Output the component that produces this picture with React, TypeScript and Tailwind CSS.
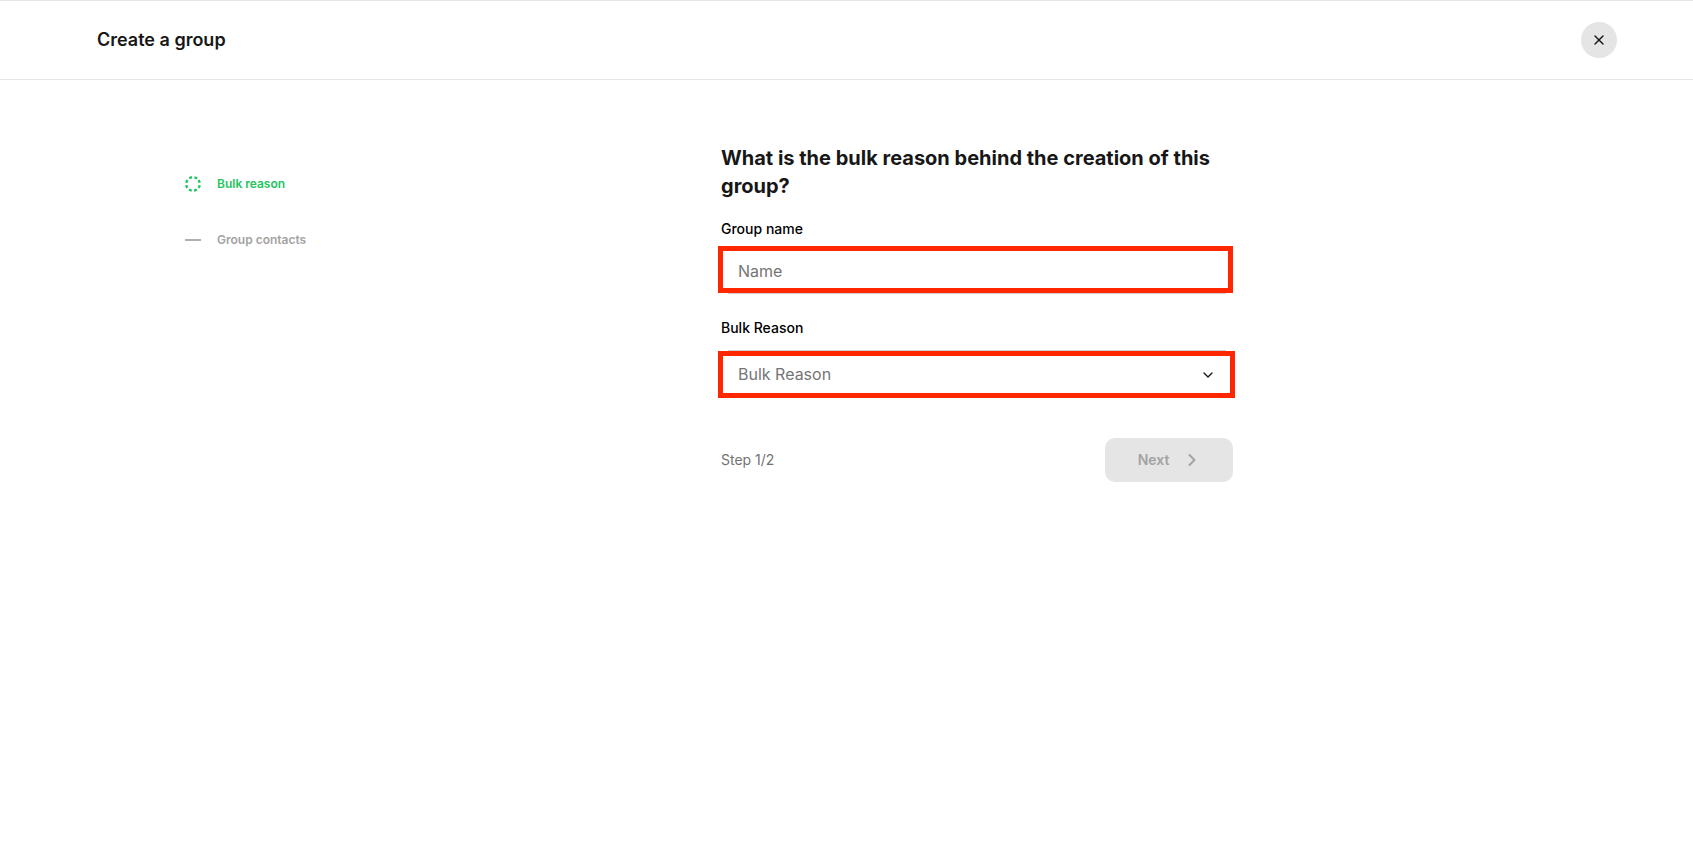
import { ChevronDown, ChevronRight, X } from "lucide-react"

function StepItem({ label, active }: { label: string; active?: boolean }) {
  return (
    <div className="flex h-4 items-center gap-4">
      {active ? (
        <svg width="16" height="16" viewBox="0 0 16 16" fill="none">
          <circle
            cx="8"
            cy="8"
            r="6.8"
            stroke="#22c55e"
            strokeWidth="2.4"
            strokeDasharray="2.9 2.44"
            transform="rotate(-35 8 8)"
          />
        </svg>
      ) : (
        <span className="h-0.5 w-4 bg-[#b0b0b0]" />
      )}
      <span className={active ? "text-xs font-semibold text-[#22c55e]" : "text-xs font-semibold text-[#a3a3a3]"}>
        {label}
      </span>
    </div>
  )
}

export default function App() {
  return (
    <div className="min-h-[859px] bg-white font-['Inter',sans-serif]">
      <header className="flex h-20 items-center justify-between border-y border-[#e5e5e5] pl-[97px] pr-[76px]">
        <h1 className="text-lg font-semibold text-[#171717]">Create a group</h1>
        <button type="button" className="flex size-9 items-center justify-center rounded-full bg-[#e5e5e5] text-[#171717]">
          <X className="size-4" />
        </button>
      </header>

      <main className="flex pl-[185px] pt-16">
        <nav className="flex w-[536px] flex-col gap-10 pt-8">
          <StepItem label="Bulk reason" active />
          <StepItem label="Group contacts" />
        </nav>

        <form className="w-[512px]">
          <h2 className="text-xl font-bold leading-7 text-[#171717]">
            What is the bulk reason behind the creation of this group?
          </h2>

          <label className="mt-[19px] block text-sm font-medium leading-5 text-black">Group name</label>
          <div className="-ml-[3px] mt-[7px] flex h-[47px] w-[515px] items-center border-[5px] border-[#ff2600] pl-[15px] pt-[2px] text-base text-[#757575]">
            Name
          </div>
          <div className="ml-[7px] h-px w-[498px] bg-[#cfcfcf]" />

          <label className="mt-[24px] block text-sm font-medium leading-5 text-black">Bulk Reason</label>
          <div className="ml-[7px] mt-[12px] h-px w-[498px] bg-[#cfcfcf]" />
          <div className="-ml-[3px] flex h-[47px] w-[517px] items-center justify-between border-[5px] border-[#ff2600] pl-[15px] pr-[14px] text-base text-[#757575]">
            <span className="mb-[2px]">Bulk Reason</span>
            <ChevronDown className="size-4 text-[#171717]" />
          </div>

          <div className="mt-[40px] flex items-center justify-between">
            <span className="text-sm text-[#737373]">Step 1/2</span>
            <button
              type="button"
              disabled
              className="flex h-11 w-[128px] items-center justify-center gap-[13px] rounded-[10px] bg-[#e5e5e5] pl-[2px] text-sm font-semibold text-[#a3a3a3]"
            >
              Next
              <ChevronRight className="size-5" strokeWidth={2.4} />
            </button>
          </div>
        </form>
      </main>
    </div>
  )
}
